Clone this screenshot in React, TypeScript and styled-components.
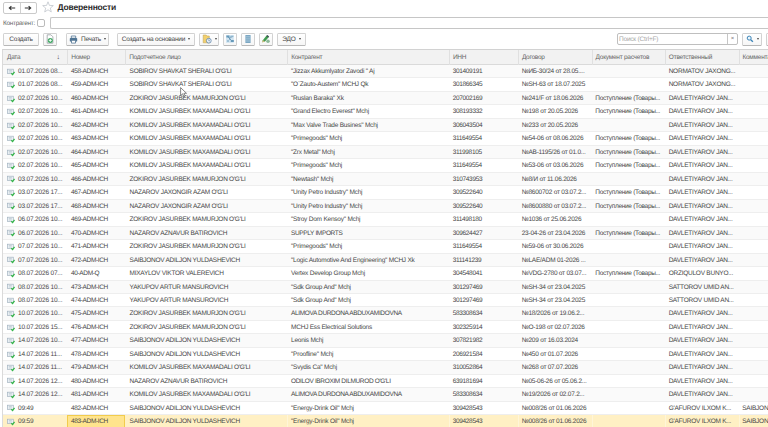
import styled, { createGlobalStyle, css } from 'styled-components';

interface Entry {
  date: string;
  number: string;
  person: string;
  company: string;
  inn: string;
  contract: string;
  settlement?: string;
  responsible: string;
  comment?: string;
}

const KOMILOV = "KOMILOV JASURBEK MAXAMADALI O'G'LI";
const ZOKIROV = "ZOKIROV JASURBEK MAMURJON O'G'LI";
const SAIBJONOV = 'SAIBJONOV ADILJON YULDASHEVICH';
const DAVLET = 'DAVLETIYAROV JAN...';
const RECEIPT = 'Поступление (Товары...';

const entry = (
  date: string,
  number: string,
  person: string,
  company: string,
  inn: string,
  contract: string,
  responsible = DAVLET,
  settlement = '',
  comment = ''
): Entry => ({ date, number, person, company, inn, contract, responsible, settlement, comment });

const entries: Entry[] = [
  entry('01.07.2026 08...', '458-ADM-ICH', "SOBIROV SHAVKAT SHERALI O'G'LI", '"Jizzax Akkumlyator Zavodi " Aj', '301409191', '№ИБ-30/24 от 28.05....', 'NORMATOV JAXONG...'),
  entry('01.07.2026 08...', '459-ADM-ICH', "SOBIROV SHAVKAT SHERALI O'G'LI", '"O`Zauto-Austem" MCHJ Qk', '301866345', '№SH-63 от 18.07.2025', 'NORMATOV JAXONG...'),
  entry('02.07.2026 10...', '460-ADM-ICH', ZOKIROV, '"Ruslan Baraka" Xk', '207002169', '№241/F от 18.06.2026', DAVLET, RECEIPT),
  entry('02.07.2026 10...', '461-ADM-ICH', KOMILOV, '"Grand Electro Everest" Mchj', '308193332', '№198 от 20.05.2026', DAVLET, RECEIPT),
  entry('02.07.2026 10...', '462-ADM-ICH', KOMILOV, '"Max Valve Trade Busines" Mchj', '306043504', '№233 от 20.05.2026'),
  entry('02.07.2026 10...', '463-ADM-ICH', KOMILOV, '"Primegoods" Mchj', '311649554', '№54-06 от 08.06.2026', DAVLET, RECEIPT),
  entry('02.07.2026 10...', '464-ADM-ICH', KOMILOV, '"Zrx Metal" Mchj', '311998105', '№AB-1195/26 от 01.0...', DAVLET, RECEIPT),
  entry('02.07.2026 10...', '465-ADM-ICH', KOMILOV, '"Primegoods" Mchj', '311649554', '№53-06 от 03.06.2026', DAVLET, RECEIPT),
  entry('03.07.2026 10...', '466-ADM-ICH', ZOKIROV, '"Newtash" Mchj', '310743953', '№8/И от 11.06.2026'),
  entry('03.07.2026 17...', '467-ADM-ICH', "NAZAROV JAXONGIR AZAM O'G'LI", '"Unity Petro Industry" Mchj', '309522640', '№8600702 от 03.07.2...', DAVLET, RECEIPT),
  entry('03.07.2026 17...', '468-ADM-ICH', "NAZAROV JAXONGIR AZAM O'G'LI", '"Unity Petro Industry" Mchj', '309522640', '№8600880 от 03.07.2...', DAVLET, RECEIPT),
  entry('06.07.2026 10...', '469-ADM-ICH', ZOKIROV, '"Stroy Dom Kensoy" Mchj', '311498180', '№1036 от 25.06.2026'),
  entry('06.07.2026 10...', '470-ADM-ICH', 'NAZAROV AZNAVUR BATIROVICH', 'SUPPLY IMPORTS', '309624427', '23-04-26 от 23.04.2026', DAVLET, RECEIPT),
  entry('07.07.2026 10...', '471-ADM-ICH', ZOKIROV, '"Primegoods" Mchj', '311649554', '№59-06 от 30.06.2026'),
  entry('07.07.2026 10...', '472-ADM-ICH', SAIBJONOV, '"Logic Automotive And Engineering" MCHJ Xk', '311141239', '№LAE/ADM 01-2026 ...'),
  entry('08.07.2026 07...', '40-ADM-Q', 'MIXAYLOV VIKTOR VALEREVICH', 'Vertex Develop Group Mchj', '304548041', '№VDG-2780 от 03.07...', 'ORZIQULOV BUNYO...', RECEIPT),
  entry('08.07.2026 10...', '473-ADM-ICH', 'YAKUPOV ARTUR MANSUROVICH', '"Sdk Group And" Mchj', '301297469', '№SH-34 от 23.04.2025', 'SATTOROV UMID AN...'),
  entry('08.07.2026 10...', '474-ADM-ICH', 'YAKUPOV ARTUR MANSUROVICH', '"Sdk Group And" Mchj', '301297469', '№SH-34 от 23.04.2025', 'SATTOROV UMID AN...'),
  entry('10.07.2026 10...', '475-ADM-ICH', ZOKIROV, 'ALIMOVA DURDONA ABDUXAMIDOVNA', '583308634', '№18/2026 от 19.06.2...'),
  entry('10.07.2026 15...', '476-ADM-ICH', ZOKIROV, 'MCHJ Ess Electrical Solutions', '302325914', '№О-198 от 02.07.2026'),
  entry('14.07.2026 10...', '477-ADM-ICH', SAIBJONOV, 'Leonis Mchj', '307821982', '№209 от 16.03.2024'),
  entry('14.07.2026 11...', '478-ADM-ICH', SAIBJONOV, '"Proofline" Mchj', '206921584', '№450 от 01.07.2026'),
  entry('14.07.2026 11...', '479-ADM-ICH', KOMILOV, '"Svydis Ca" Mchj', '310052864', '№268 от 07.07.2026'),
  entry('14.07.2026 12...', '480-ADM-ICH', 'NAZAROV AZNAVUR BATIROVICH', "ODILOV IBROXIM DILMUROD O'G'LI", '639181694', '№05-06-26 от 05.06.2...'),
  entry('14.07.2026 12...', '481-ADM-ICH', KOMILOV, 'ALIMOVA DURDONA ABDUXAMIDOVNA', '583308634', '№19/2026 от 02.07.2...'),
  entry('09:49', '482-ADM-ICH', SAIBJONOV, '"Energy-Drink Oil" Mchj', '309428543', '№008/26 от 01.06.2026', "G'AFUROV ILXOM K...", '', 'SAIBJONOV'),
  entry('09:59', '483-ADM-ICH', SAIBJONOV, '"Energy-Drink Oil" Mchj', '309428543', '№008/26 от 01.06.2026', "G'AFUROV ILXOM K...", '', 'SAIBJONOV'),
];

const headers = ['Номер', 'Подотчетное лицо', 'Контрагент', 'ИНН', 'Договор', 'Документ расчетов', 'Ответственный', 'Комментарий'];

// all-caps names are set tighter than mixed-case ones
const companySpacing = (name: string) => (name === name.toUpperCase() ? -0.35 : -0.22);

const PostedIcon = () => (
  <svg width="9" height="8" viewBox="0 0 9 8">
    <rect x=".5" y="1.2" width="5.8" height="4.2" fill="#eef3f7" stroke="#a3b3c0" strokeWidth=".7" />
    <path d="M1.8 2.6h3M1.8 4h3" stroke="#a9b8c4" strokeWidth=".6" />
    <path d="M4.3 5.3l1.3 1.3 1.9-2.8" fill="none" stroke="#35b54a" strokeWidth="1.3" />
  </svg>
);

const Arrow = ({ back }: { back?: boolean }) => (
  <svg width="8" height="8" viewBox="0 0 8 8">
    <path d={back ? 'M7.2 4H1.3M3.4 2.1L1.3 4l2.1 1.9' : 'M.8 4h5.9M4.6 2.1L6.7 4 4.6 5.9'} fill="none" stroke="#333" strokeWidth="1.1" />
  </svg>
);

const CopyIcon = () => (
  <svg width="10" height="10" viewBox="0 0 10 10">
    <path d="M2.2.8h3.7l2 2v6.4H2.2z" fill="#fff" stroke="#8c9398" strokeWidth=".7" />
    <circle cx="5.3" cy="6.4" r="2.5" fill="#3fa863" />
    <path d="M5.3 4.9v3M3.8 6.4h3" stroke="#fff" strokeWidth=".9" />
  </svg>
);

const PrinterIcon = () => (
  <svg width="9" height="9" viewBox="0 0 9 9">
    <path d="M2.3 1h4.4v2.2H2.3z" fill="#fff" stroke="#507594" strokeWidth=".8" />
    <rect x=".8" y="3.1" width="7.4" height="3.5" rx=".7" fill="#507594" />
    <path d="M2.5 5.3h4v2.8h-4z" fill="#fff" stroke="#507594" strokeWidth=".8" />
  </svg>
);

const FolderClockIcon = () => (
  <svg width="10" height="10" viewBox="0 0 10 10">
    <path d="M1.2 1h3l.8 1h2.3v6.8H1.2z" fill="#f2d06e" stroke="#c5a75c" strokeWidth=".6" />
    <circle cx="6.8" cy="6.7" r="2.4" fill="#eef4fa" stroke="#6287ac" strokeWidth=".8" />
    <path d="M6.8 5.3v1.5h1.1" fill="none" stroke="#4f7191" strokeWidth=".6" />
  </svg>
);

const StructureIcon = () => (
  <svg width="10" height="10" viewBox="0 0 10 10">
    <rect x="1" y="1" width="7.8" height="7.8" fill="#d0e4f1" />
    <path d="M2.3 2.3l5 5M7.3 3H4.8v3" stroke="#5e90b1" strokeWidth=".8" fill="none" />
    <path d="M1.4 1.4h3v2.2h-3zM5.8 5.9h3v2.2h-3z" fill="#6699b9" />
    <path d="M6.2 1.7h2.2v1.4H6.2zM2 6.2h2v1.6H2z" fill="#8fb5cd" />
  </svg>
);

const RegisterIcon = () => (
  <svg width="8" height="10" viewBox="0 0 8 10">
    <rect x="1.4" y="1" width="5.2" height="8" fill="#7ba7c3" />
    <path d="M1.8 2.8h4.4M1.8 4.9h4.4M1.8 7h4.4" stroke="#c3daea" strokeWidth=".6" />
  </svg>
);

const PenIcon = () => (
  <svg width="10" height="10" viewBox="0 0 10 10">
    <path d="M1.8 6.2l3.8-4.6 2 1.6-3.6 4.3-2.6.7z" fill="#3f9a50" />
    <path d="M1.8 6l2 1.6-2.5.8z" fill="#d9bd78" />
    <path d="M5.3 2l2.1 1.6.7-1.1L6.4 1z" fill="#37454c" />
    <circle cx="7" cy="7.2" r="1.8" fill="#8db99a" />
  </svg>
);

const SearchIcon = () => (
  <svg width="8" height="8" viewBox="0 0 8 8">
    <circle cx="3.2" cy="3.1" r="2" fill="#eaf5fc" stroke="#3b84b7" strokeWidth="1" />
    <path d="M4.7 4.7l2.2 2" stroke="#3b84b7" strokeWidth="1.4" />
  </svg>
);

const App = () => (
  <Page>
    <GlobalStyle />
    <TitleBar>
      <NavGroup>
        <NavButton><Arrow back /></NavButton>
        <NavButton><Arrow /></NavButton>
      </NavGroup>
      <Star width="12" height="12" viewBox="0 0 12 12">
        <path d="M6 .8l1.4 3.6 3.9.2-3 2.5 1 3.8L6 8.8l-3.3 2.1 1-3.8-3-2.5 3.9-.2z" fill="#fff" stroke="#b9bfc5" strokeWidth=".7" />
      </Star>
      <Title>Доверенности</Title>
    </TitleBar>
    <FilterBar>
      <FilterLabel>Контрагент:</FilterLabel>
      <Checkbox />
      <FilterInput />
    </FilterBar>
    <Toolbar>
      <Button $width={36}>Создать</Button>
      <Button $width={14} $before={4}><CopyIcon /></Button>
      <Button $width={43} $before={9}><PrinterIcon /><span>Печать</span><Caret /></Button>
      <Button $width={78} $before={8}><span>Создать на основании</span><Caret /></Button>
      <Button $width={20} $before={4}><FolderClockIcon /><Caret /></Button>
      <Button $width={14} $before={4}><StructureIcon /></Button>
      <Button $width={14} $before={4}><RegisterIcon /></Button>
      <Button $width={14} $before={4}><PenIcon /></Button>
      <Button $width={29} $before={4}><span>ЭДО</span><Caret /></Button>
      <Spacer />
      <SearchBox>
        <Placeholder>Поиск (Ctrl+F)</Placeholder>
        <Clear>×</Clear>
      </SearchBox>
      <Button $width={20} $before={4}><SearchIcon /><Caret /></Button>
      <Button $width={20} $before={4} />
    </Toolbar>
    <Table>
      <HeaderRow>
        <HeaderCell>Дата<SortMark>↓</SortMark></HeaderCell>
        {headers.map((name) => <HeaderCell key={name}>{name}</HeaderCell>)}
      </HeaderRow>
      {entries.map((e, i) => {
        const selected = i === entries.length - 1;
        return (
          <Row key={e.number} $selected={selected}>
            <DateCell><PostedIcon />{e.date}</DateCell>
            <Cell $active={selected} $spacing={-0.35}>{e.number}</Cell>
            <Cell $spacing={-0.27}>{e.person}</Cell>
            <Cell $spacing={companySpacing(e.company)}>{e.company}</Cell>
            <Cell $spacing={-0.33}>{e.inn}</Cell>
            <Cell $spacing={-0.23}>{e.contract}</Cell>
            <Cell $spacing={-0.3}>{e.settlement}</Cell>
            <Cell $spacing={-0.24}>{e.responsible}</Cell>
            <Cell $spacing={-0.24}>{e.comment}</Cell>
          </Row>
        );
      })}
    </Table>
    <Pointer width="8" height="11" viewBox="0 0 8 11">
      <path d="M.6.6v8l2-1.8 1.3 3 1.3-.6-1.3-2.9h2.6z" fill="#fff" stroke="#555" strokeWidth=".7" />
    </Pointer>
  </Page>
);

const GlobalStyle = createGlobalStyle`
  body {
    margin: 0;
    overflow: hidden;
    background: #fff;
  }
`;

const Page = styled.div`
  position: relative;
  box-sizing: border-box;
  width: 768px;
  height: 427px;
  padding-left: 3px;
  overflow: hidden;
  background: #fff;
  color: #484848;
  font-family: "Liberation Sans", Arial, sans-serif;
  font-size: 6.5px;
  white-space: nowrap;
  text-rendering: geometricPrecision;

  svg {
    flex: none;
    display: block;
  }
`;

const TitleBar = styled.div`
  display: flex;
  align-items: center;
  height: 14px;
`;

const NavGroup = styled.div`
  display: flex;
  width: 34px;
  height: 12px;
  box-sizing: border-box;
  margin-top: 1px;
  border: 1px solid #cacaca;
  border-radius: 2px;
`;

const NavButton = styled.div`
  flex: 1;
  display: flex;
  align-items: center;
  justify-content: center;

  & + & {
    border-left: 1px solid #d0d0d0;
  }
`;

const Star = styled.svg`
  margin: 0 3.5px 0 5px;
`;

const Title = styled.h1`
  margin: 0;
  color: #2a2a2a;
  font-size: 8.5px;
  font-weight: 700;
  letter-spacing: -0.16px;
  line-height: 14px;
`;

const FilterBar = styled.div`
  display: flex;
  align-items: center;
  height: 12px;
  margin-top: 3px;
`;

const FilterLabel = styled.div`
  width: 34px;
  color: #666;
  font-size: 6.4px;
  letter-spacing: -0.25px;
`;

const Checkbox = styled.div`
  box-sizing: border-box;
  width: 8px;
  height: 8px;
  border: 1px solid #bbb;
  border-radius: 2px;
`;

const FilterInput = styled.div`
  flex: 1;
  box-sizing: border-box;
  height: 12px;
  margin-left: 5px;
  border: 1px solid #c6c6c6;
  border-right: 0;
  border-radius: 2px 0 0 2px;
`;

const Toolbar = styled.div`
  display: flex;
  align-items: center;
  height: 12px;
  margin-top: 4px;
`;

const Button = styled.div<{ $width: number; $before?: number }>`
  flex: none;
  box-sizing: border-box;
  display: flex;
  align-items: center;
  justify-content: center;
  gap: 3px;
  width: ${(p) => p.$width}px;
  height: 13px;
  margin-left: ${(p) => p.$before ?? 0}px;
  border: 1px solid #d2d2d2;
  border-bottom-color: #b8b8b8;
  border-radius: 1.5px;
  background: linear-gradient(#fff, #f6f6f6);
  color: #484848;
  letter-spacing: -0.2px;
`;

const Caret = styled.i`
  border: 1.5px solid transparent;
  border-top: 2px solid #444;
  border-bottom: 0;
`;

const Spacer = styled.div`
  width: 311px;
  flex: none;
`;

const SearchBox = styled.div`
  flex: none;
  box-sizing: border-box;
  display: flex;
  width: 121px;
  height: 12px;
  border: 1px solid #bfbfbf;
  border-radius: 2px;
`;

const Placeholder = styled.div`
  flex: 1;
  padding-left: 1px;
  color: #a6a6a6;
  letter-spacing: -0.2px;
  line-height: 11px;
`;

const Clear = styled.div`
  width: 9px;
  border-left: 1px solid #c6c6c6;
  color: #666;
  font-size: 6px;
  line-height: 10px;
  text-align: center;
`;

const Table = styled.div`
  width: 800px;
  margin-top: 4px;
  border-top: 1px solid #d2d2d2;
  border-left: 1px solid #dadada;
  margin-left: -1px;
`;

const columns = css`
  display: grid;
  grid-template-columns: 64.3px 58px 162px 161.7px 69px 73.7px 73.3px 73.6px 64px;
`;

const HeaderRow = styled.div`
  ${columns}
  height: 14px;
  border-bottom: 1px solid #dadada;
  background: #f2f2f2;
  color: #666;
  line-height: 15px;
`;

const HeaderCell = styled.div`
  display: flex;
  justify-content: space-between;
  letter-spacing: -0.25px;

  & + & {
    border-left: 1px solid #e0e0e0;
    padding-left: 2.9px;
  }

  &:first-child {
    padding: 0 7.5px 0 4px;
  }
`;

const SortMark = styled.span`
  color: #444;
  font-size: 7px;
`;

const Cell = styled.div<{ $active?: boolean; $spacing?: number }>`
  padding-left: 3.7px;
  letter-spacing: ${(p) => p.$spacing ?? 0}px;

  &:nth-child(3) {
    padding-left: 4.3px;
  }

  ${(p) => p.$active && css`
    box-sizing: border-box;
    padding-left: 2.7px;
    border: 1px solid #f2cc4c;
    background: #ffe48d;
    line-height: 11px;
  `}
`;

const Row = styled.div<{ $selected: boolean }>`
  ${columns}
  box-sizing: border-box;
  height: 13.48px;
  border-bottom: 1px solid #eee;
  line-height: 13.4px;

  &:nth-child(even) {
    background: #fafafa;
  }

  ${(p) => p.$selected && css`
    && {
      background: #fff0c4;
    }

    ${Cell}:nth-child(n + 4) {
      box-shadow: inset 1px 0 #fff5d8;
    }
  `}
`;

const DateCell = styled.div`
  display: flex;
  align-items: center;
  gap: 2px;
  padding-left: 4px;
  letter-spacing: -0.17px;
`;

const Pointer = styled.svg`
  position: absolute;
  top: 87px;
  left: 180px;
`;

export default App;
